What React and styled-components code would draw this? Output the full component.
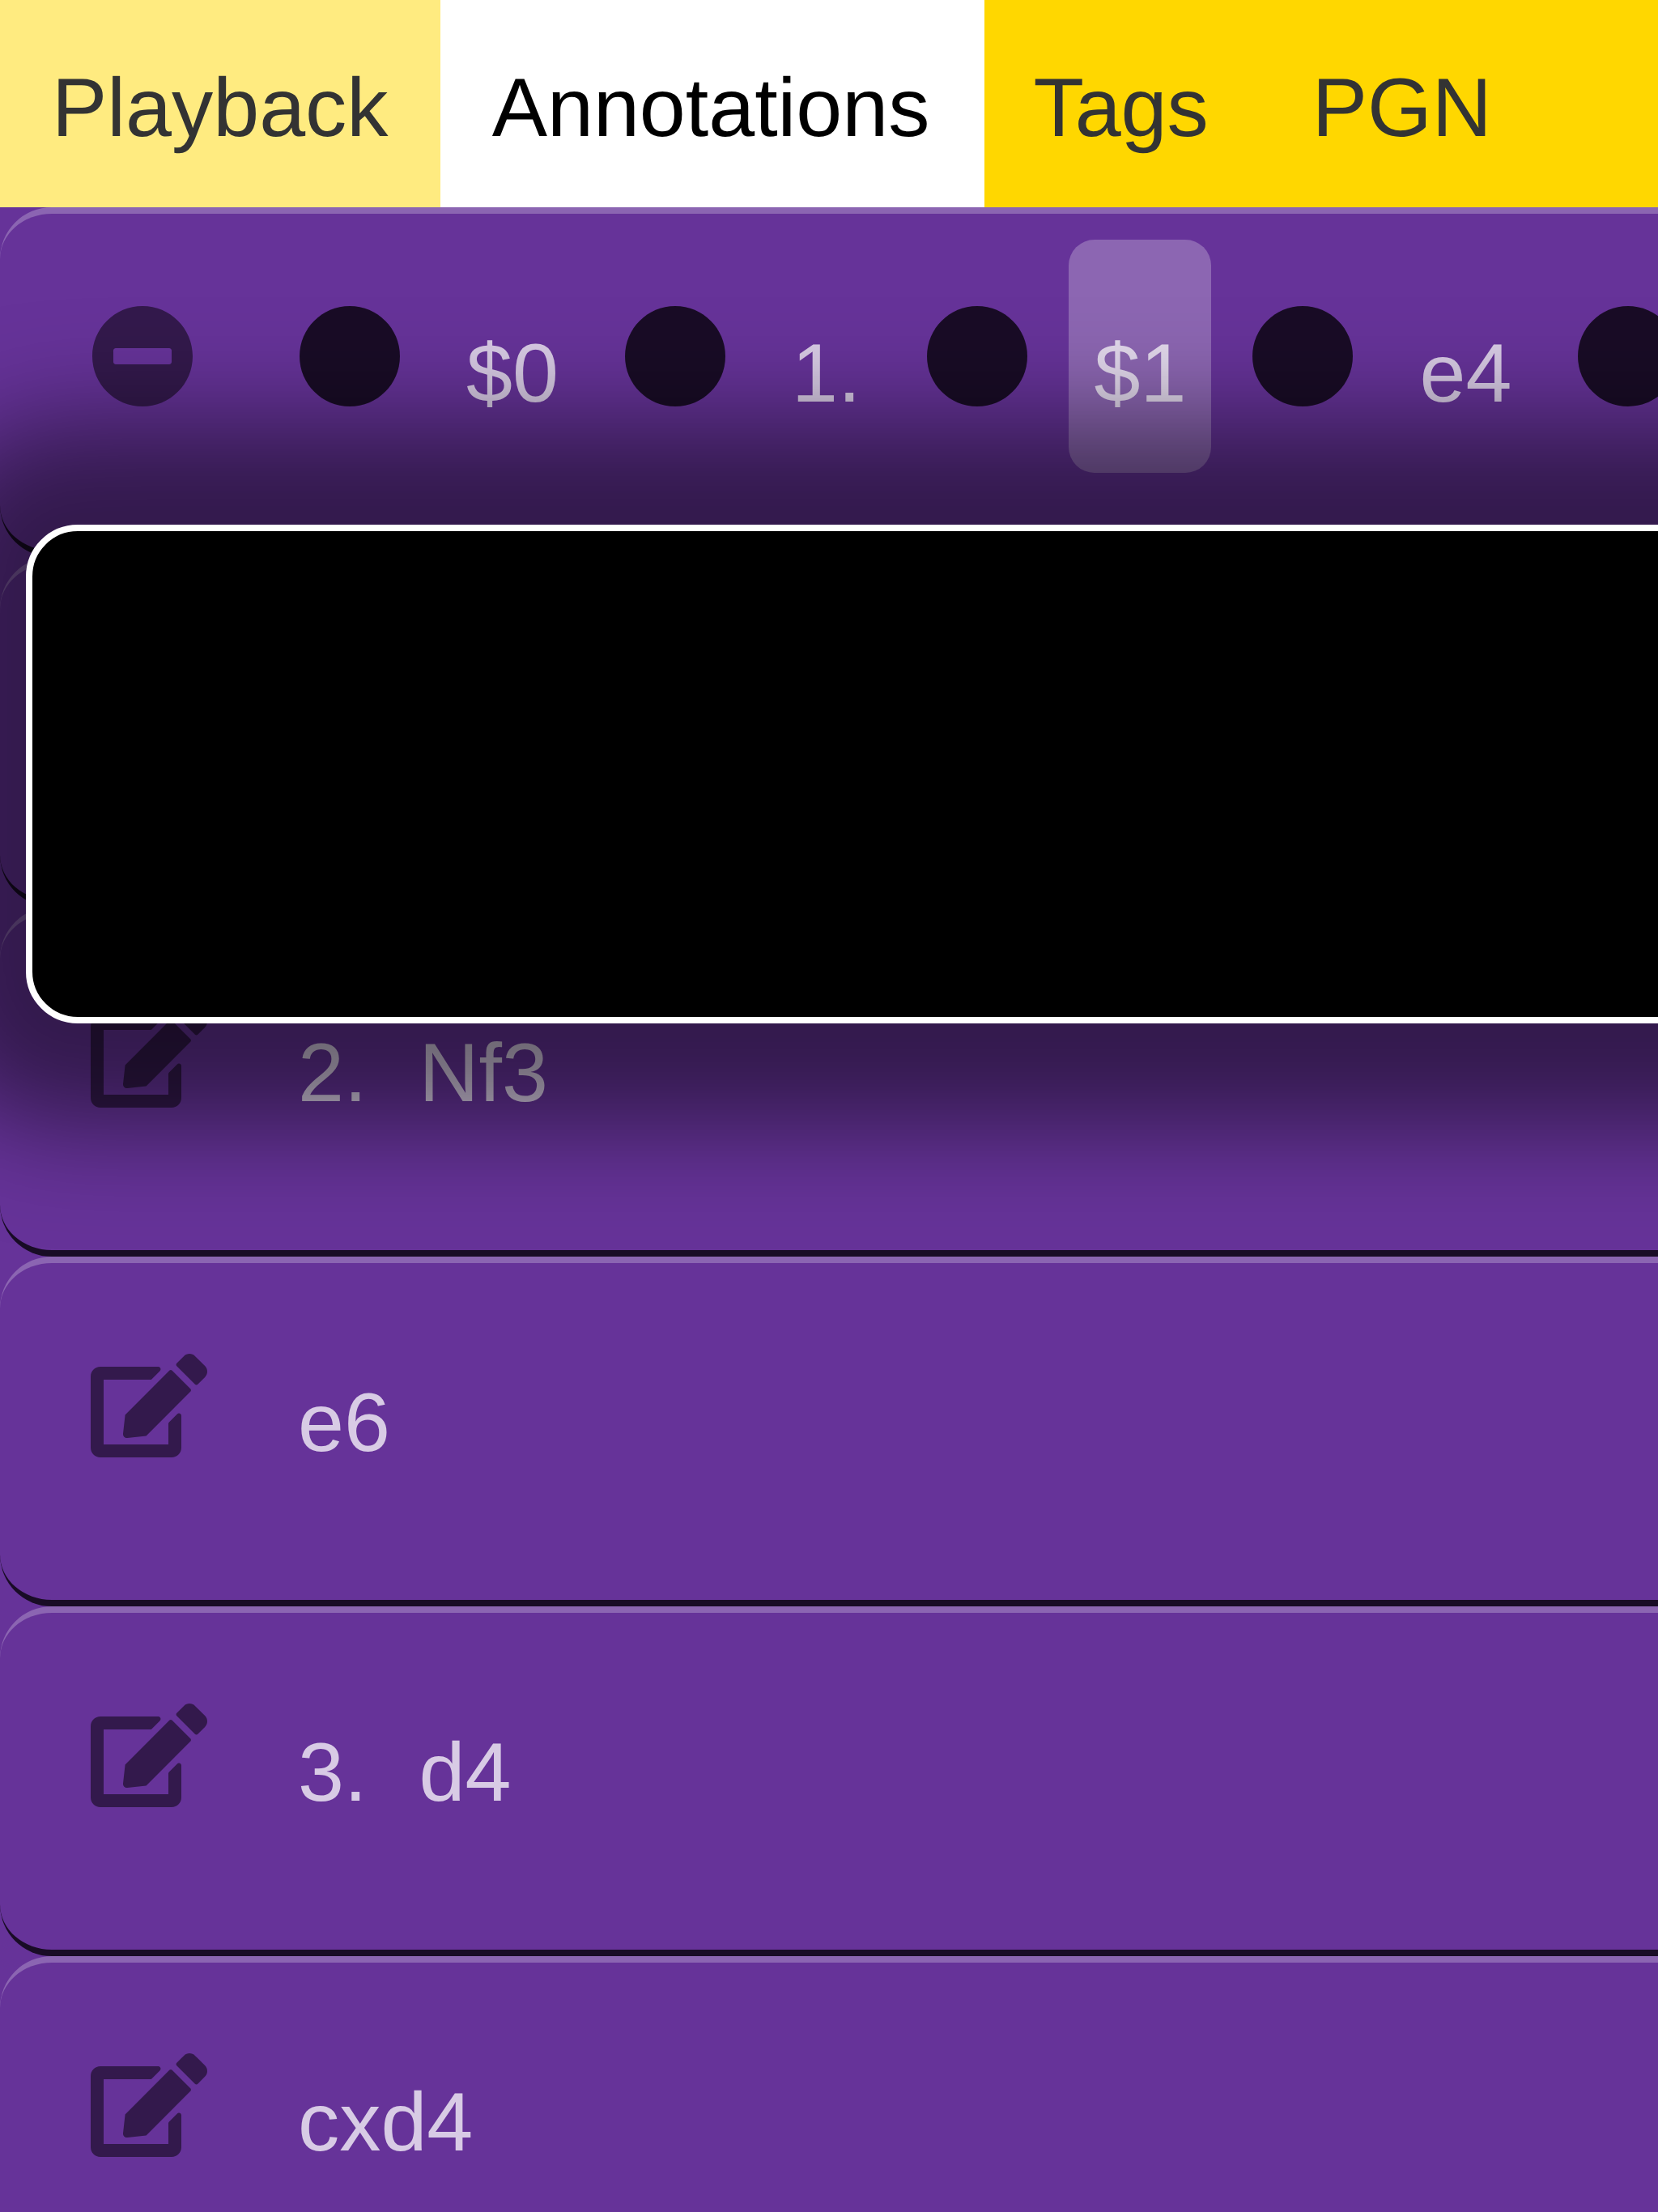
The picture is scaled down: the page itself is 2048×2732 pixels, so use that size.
import React from "react";
import styled, { createGlobalStyle, css } from "styled-components";
import { FaCircle, FaEdit, FaMinusCircle } from "react-icons/fa";

const GlobalStyle = createGlobalStyle`
  * { box-sizing: border-box; }
  body {
    margin: 0;
    background: #663399;
    overflow: hidden;
  }
`;

const Page = styled.div`
  position: relative;
  display: flex;
  flex-direction: column;
  width: 100%;
  height: 100vh;
  overflow: hidden;
  background: #663399;
  font-family: "Liberation Sans", Arial, sans-serif;
  font-size: 102.4px;
  text-rendering: geometricPrecision;
`;

const Tabs = styled.nav`
  display: flex;
  flex: none;
  height: 256px;
  background: #ffd700;
`;

const Tab = styled.div`
  flex: none;
  height: 256px;
  padding: 8px 64px 0;
  line-height: 249px;
  white-space: nowrap;
  color: #333;
  ${({ $state }) =>
    $state === "hover" &&
    css`
      padding-right: 64.2px;
      background: rgba(255, 255, 255, 0.5);
    `}
  ${({ $state }) =>
    $state === "active" &&
    css`
      margin-right: -4px;
      padding-right: 68px;
      background: #fff;
      color: #000;
    `}
`;

const Moves = styled.div`
  display: flex;
  flex-direction: column;
  width: 2400px;
`;

const Row = styled.div`
  display: flex;
  flex: none;
  height: 432px;
  padding: 32px 0 0 112px;
  border-top: 8px solid rgba(255, 255, 255, 0.25);
  border-bottom: 8px solid rgba(0, 0, 0, 0.75);
  border-radius: 64px;
`;

const Toggle = styled.div`
  display: flex;
  flex: none;
  align-items: center;
  width: ${({ $wide }) => ($wide ? 224 : 256)}px;
  height: 288px;
  color: rgba(0, 0, 0, 0.5);

  svg {
    display: block;
    flex: none;
    width: ${({ $wide }) => ($wide ? 144 : 128)}px;
    height: 128px;
  }
`;

const Insert = styled.div`
  display: flex;
  flex: none;
  align-items: center;
  height: 288px;
  margin-right: 48px;
  color: rgba(0, 0, 0, 0.75);

  svg {
    display: block;
    width: 128px;
    height: 128px;
  }

  * + & {
    margin-left: 48px;
  }

  ${Toggle} + & {
    margin-left: 0;
  }
`;

const Token = styled.div`
  flex: none;
  height: 288px;
  padding: 40px 32.1px 0 32px;
  line-height: 249px;
  white-space: nowrap;
  color: rgba(255, 255, 255, 0.75);
  ${({ $selected }) =>
    $selected &&
    css`
      margin: 0 1.5px 0 0.5px;
      padding: 40px 30.6px 0 31.5px;
      border-radius: 32px;
      background: rgba(255, 255, 255, 0.25);
    `}
`;

const Popup = styled.div`
  position: absolute;
  top: 648px;
  left: 32px;
  width: 2400px;
  height: 616px;
  border: 8px solid #fff;
  border-radius: 64px;
  background: #000;
  box-shadow: 0 0 128px 128px rgba(0, 0, 0, 0.5);
`;

const tabs = [
  { label: "Playback", state: "hover" },
  { label: "Annotations", state: "active" },
  { label: "Tags" },
  { label: "PGN" },
];

const openTokens = ["$0", "1.", "$1", "e4"];
const closedRows = [[], ["2.", "Nf3"], ["e6"], ["3.", "d4"], ["cxd4"]];

export default function App() {
  return (
    <>
      <GlobalStyle />
      <Page>
        <Tabs>
          {tabs.map(({ label, state }) => (
            <Tab key={label} $state={state}>
              {label}
            </Tab>
          ))}
        </Tabs>
        <Moves>
          <Row>
            <Toggle>
              <FaMinusCircle />
            </Toggle>
            {openTokens.map((token) => (
              <React.Fragment key={token}>
                <Insert>
                  <FaCircle />
                </Insert>
                <Token $selected={token === "$1"}>{token}</Token>
              </React.Fragment>
            ))}
            <Insert>
              <FaCircle />
            </Insert>
          </Row>
          {closedRows.map((tokens, index) => (
            <Row key={index}>
              <Toggle $wide>
                <FaEdit />
              </Toggle>
              {tokens.map((token) => (
                <Token key={token}>{token}</Token>
              ))}
            </Row>
          ))}
        </Moves>
        <Popup />
      </Page>
    </>
  );
}
